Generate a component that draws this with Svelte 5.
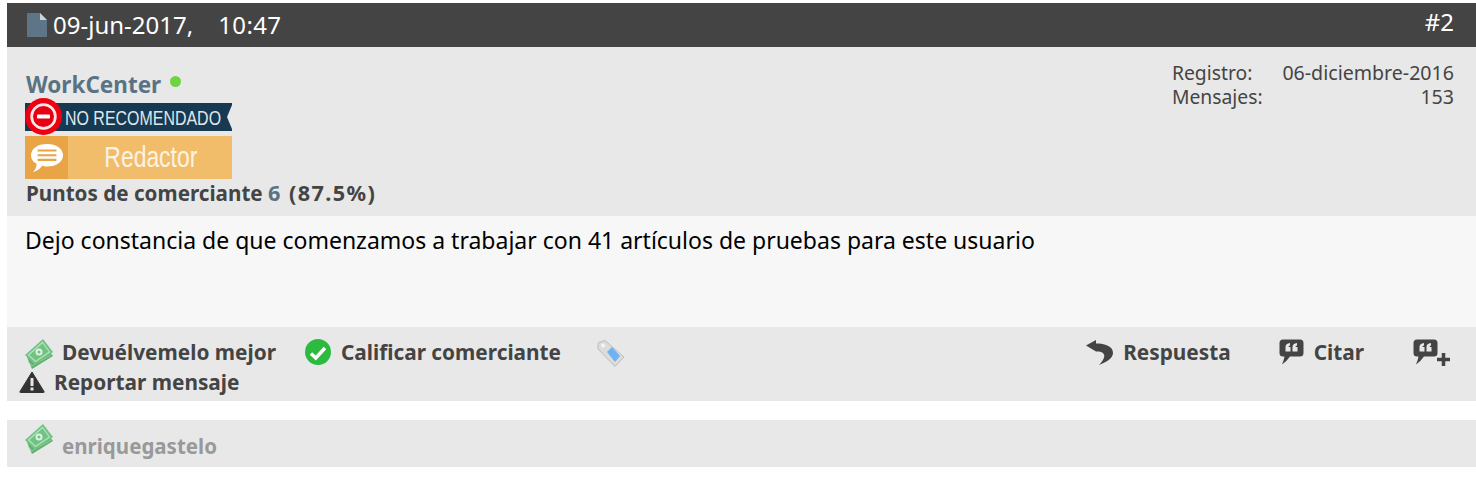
<script>
</script>

{#snippet money(cls)}
  <svg class={cls} viewBox="0 0 28 30" aria-hidden="true">
    <path d="M2 18 L7 30 L28 17 L24 12 Z" fill="#5fb06f"/>
    <path d="M3 22 L7 27 L26 16" fill="none" stroke="#8fd09d" stroke-width="1"/>
    <path d="M0 16 L18 0 L28 13 L10 26 Z" fill="#72c283"/>
    <path d="M3.500 16 L17.500 3.500 L24.500 13 L10.500 22.500 Z" fill="none" stroke="#b4e3bd" stroke-width="1.200"/>
    <circle cx="14" cy="13" r="3.500" fill="#dcf2e0"/>
    <circle cx="14" cy="13" r="1.500" fill="#72c283"/>
  </svg>
{/snippet}

{#snippet quote(cls)}
  <svg class={cls} viewBox="0 0 25 26" aria-hidden="true">
    <path d="M4 0.500 H21 Q24.500 0.500 24.500 4 V14 Q24.500 17.500 21 17.500 H11 Q8 22 3 25.500 Q5 21 5.500 17.500 H4 Q0.500 17.500 0.500 14 V4 Q0.500 0.500 4 0.500 Z" fill="#444"/>
    <path d="M6.500 12.500 V8 Q6.500 4.500 11 4 V6.500 Q9.500 6.800 9.500 8 H11.500 V12.500 Z M13.500 12.500 V8 Q13.500 4.500 18 4 V6.500 Q16.500 6.800 16.500 8 H18.500 V12.500 Z" fill="#e8e8e8"/>
  </svg>
{/snippet}

<div class="post">
  <header class="head">
    <div class="date">
      <svg class="doc" viewBox="0 0 20 24" aria-hidden="true">
        <path d="M0 0 H13 L20 7 V24 H0 Z" fill="#5d7587"/>
        <path d="M13 0 L20 7 H13 Z" fill="#c9d3da"/>
      </svg>
      <span class="stamp">09-jun-2017,</span>
      <span class="stamp time">10:47</span>
    </div>
    <a class="num" href="#2">#2</a>
  </header>

  <section class="profile">
    <div class="user">
      <div class="name"><span>WorkCenter</span><i class="online"></i></div>
      <div class="ribbon">
        <svg class="ban" viewBox="0 0 37 37" aria-hidden="true">
          <circle cx="18.500" cy="18.500" r="18.500" fill="#ee0011"/>
          <circle cx="18.500" cy="18.500" r="13.200" fill="#fbe9ea"/>
          <circle cx="18.500" cy="18.500" r="10.500" fill="#e60012"/>
          <rect x="12" y="16.500" width="13" height="4" rx="1" fill="#fff"/>
        </svg>
        <span class="ribbon-text">NO RECOMENDADO</span>
        <svg class="notch" viewBox="0 0 6 28" aria-hidden="true"><path d="M6 2 L1 14 L6 26 Z" fill="#e8e8e8"/></svg>
      </div>
      <div class="rank">
        <div class="rank-icon">
          <svg viewBox="0 0 36 34" aria-hidden="true">
            <path d="M18 2 C28 2 35 7 35 14 C35 21 28 26 18 26 C16 26 14 26 13 25 C11 28 8 31 3 32 C6 29 7 26 7 23 C3 21 1 18 1 14 C1 7 8 2 18 2 Z" fill="#fff"/>
            <path d="M8 9 H28 M8 14 H28 M8 19 H28" stroke="#e8a445" stroke-width="2.200"/>
          </svg>
        </div>
        <div class="rank-label"><span>Redactor</span></div>
      </div>
      <div class="points">Puntos de comerciante <span class="tail"><a href="#6">6</a> (87.5%)</span></div>
    </div>
    <dl class="meta">
      <div><dt>Registro:</dt><dd>06-diciembre-2016</dd></div>
      <div><dt>Mensajes:</dt><dd>153</dd></div>
    </dl>
  </section>

  <section class="body">Dejo constancia de que comenzamos a trabajar con 41 artículos de pruebas para este usuario</section>

  <section class="actions">
    <div class="left">
      <div class="row first">
        <a class="act money-act" href="#a">{@render money("ico-money")}Devuélvemelo mejor</a>
        <a class="act rate" href="#b">
          <svg class="ico-check" viewBox="0 0 26 26" aria-hidden="true">
            <circle cx="13" cy="13" r="13" fill="#2cbb3f"/>
            <path d="M6 14.500 L10.800 19 L20 9" fill="none" stroke="#fff" stroke-width="3.400"/>
          </svg>
          Calificar comerciante
        </a>
        <svg class="ico-tag" viewBox="0 0 28 27" aria-hidden="true">
          <path d="M1 4 Q1 2 3 2 L8 0.500 L27 17 L18 26.500 L1 9 Z" fill="#dcdcdc" stroke="#bdbdbd"/>
          <path d="M15 7 L23 16 L18 22 L10 12 Z" fill="#6fb2f2"/>
          <circle cx="6" cy="5.500" r="2" fill="#f5f5f5"/>
        </svg>
      </div>
      <div class="row second">
        <a class="act" href="#c">
          <svg class="ico-warn" viewBox="0 0 26 22" aria-hidden="true">
            <path d="M13 1 L25 20.500 Q25.500 21.500 24.500 21.500 H1.500 Q0.500 21.500 1 20.500 Z" fill="#333" stroke="#333" stroke-linejoin="round"/>
            <rect x="11.500" y="7" width="3" height="8" fill="#e8e8e8"/>
            <rect x="11.500" y="16.500" width="3" height="3" fill="#e8e8e8"/>
          </svg>
          Reportar mensaje
        </a>
      </div>
    </div>
    <div class="right">
      <a class="act reply" href="#r">
        <svg class="ico-reply" viewBox="0 0 27 25" aria-hidden="true">
          <path d="M0 5.500 L10 0 V3.500 C19 3.500 27 6 27 13 C27 18 21 22 13 25 C17 21 19 17 18 14.500 C17 12 14 11.500 10 11.500 Z" fill="#444"/>
        </svg>
        Respuesta
      </a>
      <a class="act cite" href="#q">{@render quote("ico-quote")}Citar</a>
      <a class="act multi" href="#m">
        {@render quote("ico-quote")}
        <svg class="ico-plus" viewBox="0 0 13 13" aria-hidden="true"><path d="M6.500 0 V13 M0 6.500 H13" stroke="#444" stroke-width="3.500"/></svg>
      </a>
    </div>
  </section>

  <section class="thanks">
    {@render money("ico-money")}
    <a href="#u">enriquegastelo</a>
  </section>
</div>

<style>
  :global(body) { margin: 0; background: #fff; }
  .post {
    margin: 3px 0 0 7px;
    font-family: "Noto Sans", "DejaVu Sans", sans-serif;
    color: #444;
  }
  a { color: inherit; text-decoration: none; }

  .head {
    height: 44px;
    background: #444;
    color: #fff;
    display: flex;
    justify-content: space-between;
    padding: 0 22px 0 20px;
    font-size: 24px;
  }
  .date { display: flex; align-items: center; gap: 6px; }
  .doc { width: 20px; height: 24px; }
  .stamp { padding-bottom: 2px; }
  .time { margin-left: 19px; letter-spacing: 0.400px; }
  .num { line-height: 38px; }

  .profile {
    height: 169px;
    box-sizing: border-box;
    background: #e8e8e8;
    display: flex;
    justify-content: space-between;
    padding: 14px 22px 0 18px;
  }
  .user { padding-top: 8px; }
  .name {
    display: flex;
    align-items: center;
    gap: 9px;
    height: 30px;
    color: #5a7384;
    font-weight: 700;
    font-size: 22.500px;
    padding-left: 1px;
  }
  .online { width: 11px; height: 11px; border-radius: 50%; background: #6dd63f; margin-top: -5px; }
  .ribbon {
    position: relative;
    width: 207px;
    height: 28px;
    margin-top: 4px;
    background: #173a52;
    color: #dfe6ea;
    font-family: "Liberation Sans", sans-serif;
    font-size: 21px;
    line-height: 29px;
    box-sizing: border-box;
    padding-left: 40px;
    white-space: nowrap;
  }
  .ribbon-text { display: inline-block; transform: scaleX(0.76); transform-origin: left center; }
  .ban { position: absolute; left: 0; top: -5px; width: 37px; height: 37px; }
  .notch { position: absolute; right: 0; top: 0; width: 6px; height: 28px; }
  .rank { display: flex; width: 207px; height: 43px; margin-top: 5px; }
  .rank-icon { width: 43px; background: #e8a445; display: flex; align-items: center; justify-content: center; }
  .rank-icon svg { width: 34px; height: 32px; }
  .rank-label {
    flex: 1;
    background: #f2bd6b;
    color: #fdf3e2;
    display: flex;
    align-items: center;
    justify-content: center;
    font-family: "Liberation Sans", sans-serif;
    font-size: 29px;
  }
  .rank-label span { display: inline-block; transform: translateX(1px) scaleX(0.79); }
  .points { font-weight: 700; font-size: 20.650px; line-height: 28px; padding-left: 1px; white-space: nowrap; }
  .tail { font-size: 21.700px; letter-spacing: 1.400px; }
  .points a { color: #5a7384; }

  .meta { margin: 0; font-size: 19.300px; line-height: 24px; width: 282px; }
  .meta div { display: flex; justify-content: space-between; }
  .meta dt { margin: 0; }
  .meta dd { margin: 0; font-size: 19.600px; }

  .body {
    height: 111px;
    box-sizing: border-box;
    background: #f7f7f7;
    color: #000;
    font-size: 23px;
    line-height: 28px;
    padding: 10px 18px;
  }

  .actions {
    height: 74px;
    background: #e8e8e8;
    display: flex;
    justify-content: space-between;
    font-weight: 700;
    font-size: 20.800px;
  }
  .row { display: flex; align-items: center; }
  .first { height: 30px; padding: 10px 0 0 18px; }
  .second { height: 30px; padding-left: 12px; }
  .act { display: inline-flex; align-items: center; }
  .money-act { gap: 9px; }
  .rate { margin-left: 29px; gap: 10px; }
  .ico-tag { width: 28px; height: 27px; margin: 3px 0 0 36px; }
  .ico-money { width: 28px; height: 30px; margin-top: 4px; }
  .ico-check { width: 26px; height: 26px; }
  .ico-warn { width: 26px; height: 22px; margin-right: 9px; }
  .right { display: flex; height: 50px; align-items: center; padding-right: 26px; }
  .ico-reply { width: 27px; height: 25px; margin-right: 10px; }
  .ico-quote { width: 25px; height: 26px; margin-right: 10px; }
  .cite { margin-left: 48px; }
  .multi { margin-left: 49px; }
  .multi .ico-quote { margin-right: -1px; }
  .ico-plus { width: 13px; height: 13px; margin-top: 14px; }

  .thanks {
    margin-top: 19px;
    height: 47px;
    background: #e8e8e8;
    display: flex;
    align-items: flex-start;
    padding-left: 18px;
    color: #999;
    font-weight: 700;
    font-size: 20.500px;
  }
  .thanks a { margin: 12px 0 0 9px; }
  .thanks .ico-money { margin-top: 4px; }
</style>
